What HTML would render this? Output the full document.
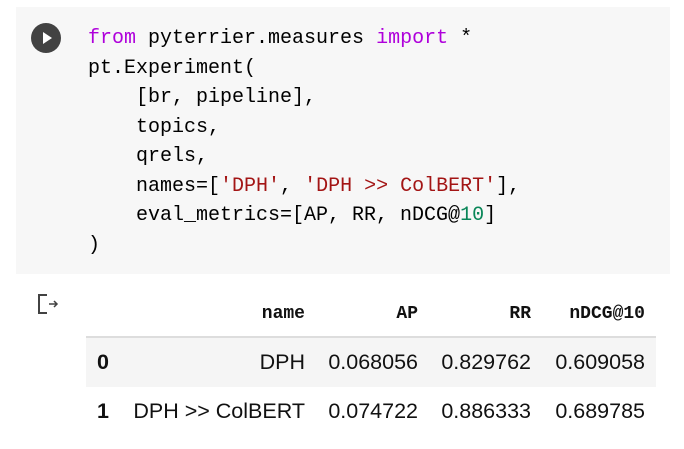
<!DOCTYPE html>
<html><head><meta charset="utf-8"><style>
body{margin:0;width:684px;height:449px;background:#fff;position:relative;overflow:hidden;font-family:"Liberation Sans",sans-serif}
.cell{position:absolute;left:16px;top:7px;width:654px;height:267px;background:#f7f7f7}
.play{position:absolute;left:31px;top:23px;width:30px;height:30px;border-radius:50%;background:#424242}
.play:after{content:"";position:absolute;left:12px;top:9px;border-left:9px solid #fff;border-top:6px solid transparent;border-bottom:6px solid transparent}
pre{position:absolute;left:88px;top:24px;margin:0;font-family:"Liberation Mono",monospace;font-size:20px;line-height:29.5px;color:#000}
.k{color:#af00db}.s{color:#a31515}.n{color:#098658}
table{position:absolute;left:86px;top:292px;border-collapse:collapse;font-size:21.5px;color:#111}
th{font-family:"Liberation Mono",monospace;font-weight:bold;font-size:18px;text-align:right;height:44px;padding:0 11px 0 11px;border-bottom:2px solid #ddd}
td{text-align:right;height:49px;padding:0 11px}
tr.g td{background:#f5f5f5}
td.i{font-weight:bold;text-align:left}
</style></head><body>
<div class="cell"></div>
<div class="play"></div>
<pre><span class="k">from</span> pyterrier.measures <span class="k">import</span> *
pt.Experiment(
    [br, pipeline],
    topics,
    qrels,
    names=[<span class="s">'DPH'</span>, <span class="s">'DPH &gt;&gt; ColBERT'</span>],
    eval_metrics=[AP, RR, nDCG@<span class="n">10</span>]
)</pre>
<svg style="position:absolute;left:37px;top:293px" width="24" height="24" viewBox="0 0 24 24"><path d="M10 2H2v18h8" fill="none" stroke="#424242" stroke-width="2"/><path d="M12 11h8M17 8l3 3-3 3" fill="none" stroke="#424242" stroke-width="1.5"/></svg>
<table>
<tr><th style="width:12px"></th><th style="width:174px">name</th><th style="width:91px">AP</th><th style="width:91px">RR</th><th style="width:92px">nDCG@10</th></tr>
<tr class="g"><td class="i">0</td><td>DPH</td><td>0.068056</td><td>0.829762</td><td>0.609058</td></tr>
<tr><td class="i">1</td><td>DPH &gt;&gt; ColBERT</td><td>0.074722</td><td>0.886333</td><td>0.689785</td></tr>
</table>
</body></html>
